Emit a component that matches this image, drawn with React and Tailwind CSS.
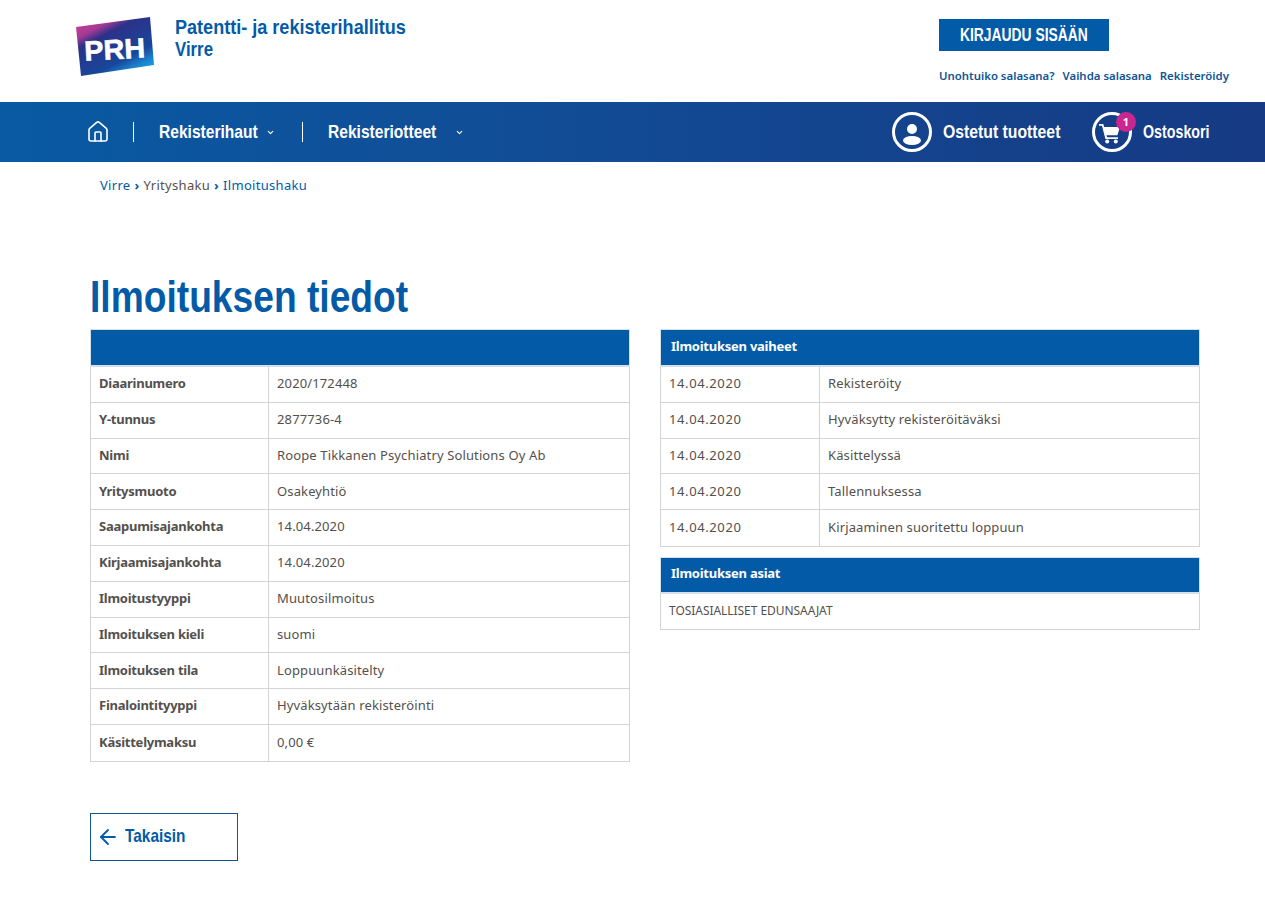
import React from 'react';
import { ChevronDown, Home, ArrowLeft } from 'lucide-react';

const narrow = "font-['Liberation_Sans',sans-serif]";
const body = "font-['Noto_Sans',sans-serif]";

const details = [
  ['Diaarinumero', '2020/172448'],
  ['Y-tunnus', '2877736-4'],
  ['Nimi', 'Roope Tikkanen Psychiatry Solutions Oy Ab'],
  ['Yritysmuoto', 'Osakeyhtiö'],
  ['Saapumisajankohta', '14.04.2020'],
  ['Kirjaamisajankohta', '14.04.2020'],
  ['Ilmoitustyyppi', 'Muutosilmoitus'],
  ['Ilmoituksen kieli', 'suomi'],
  ['Ilmoituksen tila', 'Loppuunkäsitelty'],
  ['Finalointityyppi', 'Hyväksytään rekisteröinti'],
  ['Käsittelymaksu', '0,00 €'],
];

const phases = [
  ['14.04.2020', 'Rekisteröity'],
  ['14.04.2020', 'Hyväksytty rekisteröitäväksi'],
  ['14.04.2020', 'Käsittelyssä'],
  ['14.04.2020', 'Tallennuksessa'],
  ['14.04.2020', 'Kirjaaminen suoritettu loppuun'],
];

// the site's condensed face isn't installed, so squeeze Liberation Sans instead
const Narrow = ({ w, scale, children }) => (
  <span className={`block whitespace-nowrap ${w}`}>
    <span className={`inline-block origin-left ${scale}`}>{children}</span>
  </span>
);

const Logo = () => (
  <svg width="80" height="60" viewBox="0 0 80 60" className="shrink-0">
    <defs>
      <linearGradient id="prh" x1="0.12" y1="0" x2="0.8" y2="1">
        <stop offset="0" stopColor="#cf4296" />
        <stop offset="0.2" stopColor="#a23a94" />
        <stop offset="0.32" stopColor="#2c3189" />
        <stop offset="0.72" stopColor="#17479a" />
        <stop offset="0.86" stopColor="#1a7fcb" />
        <stop offset="1" stopColor="#14a8e6" />
      </linearGradient>
    </defs>
    <polygon points="0,10 74,0 78,48 5,59" fill="url(#prh)" />
    <text x="8" y="42" fill="#fff" stroke="#fff" strokeWidth="0.6" fontFamily="Liberation Sans" fontWeight="700" fontSize="28" transform="rotate(-3 40 30)" textLength="61" lengthAdjust="spacingAndGlyphs">PRH</text>
  </svg>
);

const PersonIcon = () => (
  <span className="flex h-10 w-10 items-center justify-center rounded-full border-[3px] border-white">
    <svg width="22" height="26" viewBox="0 0 22 26" fill="#fff">
      <circle cx="11" cy="10" r="5" />
      <ellipse cx="11" cy="21.5" rx="9" ry="4.5" />
    </svg>
  </span>
);

const CartIcon = () => (
  <svg width="22" height="21" viewBox="0 0 22 21" fill="#fff" className="mr-[5px] mt-[3px]">
    <path d="M0 1h4.2l1 3H21l-2.6 8.2H7.6l.5 2H19v1.8H6.4L3 2.8H0z" />
    <circle cx="8.2" cy="18.6" r="2" />
    <circle cx="16.8" cy="18.6" r="2" />
  </svg>
);

const Row = ({ a, b, first, labelCls }) => (
  <div className="flex h-[35.8px] border-b border-[#d4d4d4] text-[13px] text-[#54504d] last:border-b-0">
    <div className={`flex items-center border-r border-[#d4d4d4] pb-px pl-2 ${first} ${labelCls}`}>{a}</div>
    <div className="flex flex-1 items-center pb-px pl-2 tracking-[0.13px]">{b}</div>
  </div>
);

const Table = ({ title, headH = 'h-[38px]', children }) => (
  <div className="border-x border-b border-[#d4d4d4]">
    <div className={`-mx-px flex items-center border border-b-2 border-[#d4dfea] bg-[#035ba7] pb-[2px] pl-[10px] text-[13px] font-bold tracking-[-0.25px] text-white ${headH}`}>
      {title}
    </div>
    {children}
  </div>
);

export default function App() {
  return (
    <div className={`min-h-[899px] bg-white ${body}`}>
      <header className="flex h-[102px]">
        <div className="ml-[76px] mt-[17px] flex">
          <Logo />
          <div className={`ml-[19px] -mt-px text-[21px] font-bold leading-[22px] text-[#035ba7] ${narrow}`}>
            <Narrow w="w-[230px]" scale="scale-x-[0.86]">Patentti- ja rekisterihallitus</Narrow>
            <Narrow w="w-[40px]" scale="scale-x-[0.8]">Virre</Narrow>
          </div>
        </div>
        <div className="ml-auto mr-[35px] mt-[19px] flex w-[291px] flex-col">
          <div className={`flex h-8 w-[170px] items-center bg-[#035ba7] pl-[21px] text-[18px] font-bold text-white ${narrow}`}>
            <Narrow w="w-[128px]" scale="scale-x-[0.77]">KIRJAUDU SISÄÄN</Narrow>
          </div>
          <div className="mt-[16px] flex gap-2 whitespace-nowrap text-[11.4px] font-semibold text-[#0f5596]">
            <span>Unohtuiko salasana?</span>
            <span>Vaihda salasana</span>
            <span>Rekisteröidy</span>
          </div>
        </div>
      </header>

      <nav className={`flex h-[60px] items-center bg-gradient-to-r from-[#085aa3] to-[#163a84] pl-[85px] pr-[55px] text-[19px] font-bold text-white ${narrow}`}>
        <Home size={24} strokeWidth={1.6} className="ml-px" />
        <span className="ml-[23px] h-5 w-px bg-white" />
        <span className="ml-[25px]"><Narrow w="w-[99px]" scale="scale-x-[0.82]">Rekisterihaut</Narrow></span>
        <ChevronDown size={9} strokeWidth={3} className="ml-[8px]" />
        <span className="ml-[27px] h-5 w-px bg-white" />
        <span className="ml-[25px]"><Narrow w="w-[108px]" scale="scale-x-[0.82]">Rekisteriotteet</Narrow></span>
        <ChevronDown size={9} strokeWidth={3} className="ml-[19px]" />
        <div className="ml-auto flex items-center">
          <PersonIcon />
          <span className="ml-[11px]"><Narrow w="w-[118px]" scale="scale-x-[0.83]">Ostetut tuotteet</Narrow></span>
          <span className="relative ml-[31px] flex h-10 w-10 items-center justify-center rounded-full border-[3px] border-white">
            <CartIcon />
            <span className={`absolute -right-[7px] -top-[3px] flex h-5 w-5 items-center justify-center rounded-full bg-[#c9268f] text-[11px] font-bold ${body}`}>1</span>
          </span>
          <span className="ml-[11px]"><Narrow w="w-[67px]" scale="scale-x-[0.75]">Ostoskori</Narrow></span>
        </div>
      </nav>

      <div className="ml-[100px] mt-[14px] flex gap-1 text-[13px] leading-[18px] tracking-[0.3px] text-[#035ba7]">
        <span>Virre</span>
        <span className="font-bold">›</span>
        <span className="text-[#54504d]">Yrityshaku</span>
        <span className="font-bold">›</span>
        <span>Ilmoitushaku</span>
      </div>

      <main className="ml-[90px] mt-[76px] w-[1110px]">
        <h1 className={`mb-[6px] h-[53px] text-[44px] font-bold leading-[53px] text-[#035ba7] ${narrow}`}>
          <Narrow w="w-[318px]" scale="scale-x-[0.845]">Ilmoituksen tiedot</Narrow>
        </h1>
        <div className="flex gap-[30px]">
          <div className="w-[540px]">
            <Table title="">
              {details.map(([a, b]) => (
                <Row key={a} a={a} b={b} first="w-[178px]" labelCls="font-bold tracking-[-0.25px]" />
              ))}
            </Table>
          </div>
          <div className="w-[540px]">
            <Table title="Ilmoituksen vaiheet">
              {phases.map(([a, b]) => (
                <Row key={b} a={a} b={b} first="w-[159px]" labelCls="tracking-[0.6px]" />
              ))}
            </Table>
            <div className="mt-[10px]">
              <Table title="Ilmoituksen asiat" headH="h-[37px]">
                <div className="flex h-[35px] items-center pl-2 text-[12px] tracking-[-0.05px] text-[#54504d]">TOSIASIALLISET EDUNSAAJAT</div>
              </Table>
            </div>
          </div>
        </div>
        <div className={`mt-[51px] flex h-12 w-[148px] items-center border border-[#0f5596] pb-[2px] pl-[5px] text-[19px] font-bold text-[#035ba7] ${narrow}`}>
          <ArrowLeft size={24} strokeWidth={1.8} className="mr-[5px] mt-[2px]" />
          <Narrow w="w-[60px]" scale="scale-x-[0.81]">Takaisin</Narrow>
        </div>
      </main>
    </div>
  );
}
